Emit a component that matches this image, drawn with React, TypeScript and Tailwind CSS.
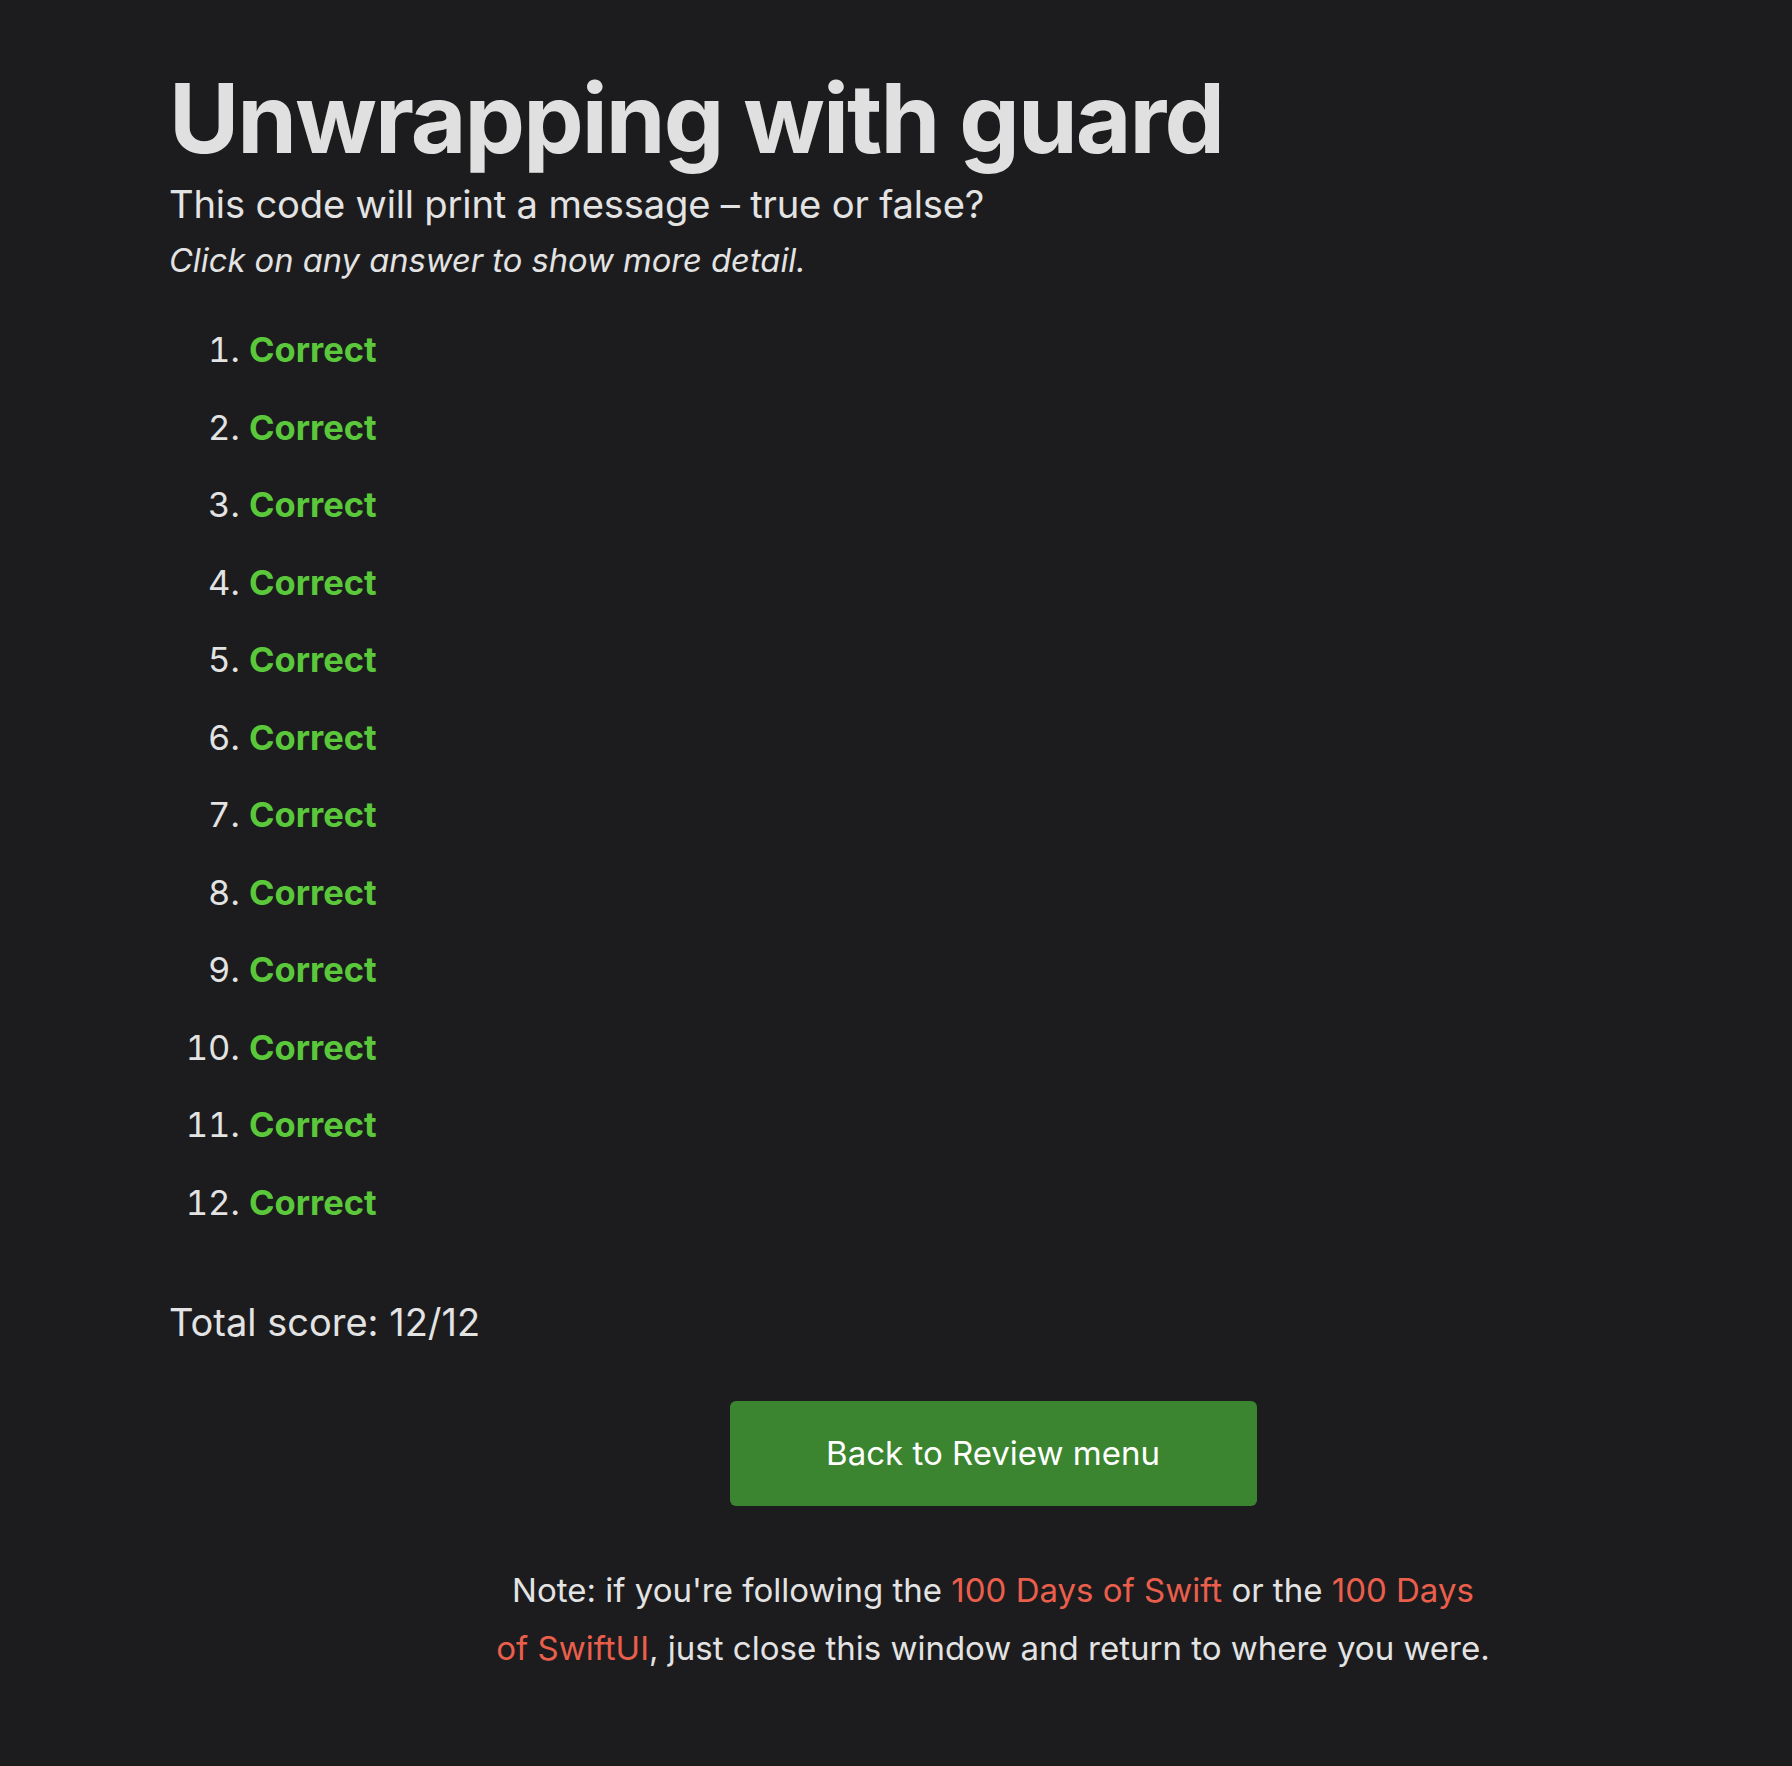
const answers = Array.from({ length: 12 }, (_, i) => i + 1);

export default function App() {
  return (
    <div className="min-h-screen bg-[#1c1c1e] text-[#e3e3e3] font-['Inter',sans-serif] pb-[80px]">
      <div className="pl-[169px] pt-[70px]">
        <h1 className="text-[96px] font-bold leading-none tracking-[-0.02em] text-[#e0e0e0]">
          Unwrapping with guard
        </h1>
        <p className="mt-[14px] text-[38.2px] leading-[48px] tracking-[-0.005em]">
          This code will print a message – true or false?
        </p>
        <p className="mt-[8px] text-[32.7px] leading-[48px] italic">
          Click on any answer to show more detail.
        </p>

        <ol className="mt-[27px] list-decimal pl-[80px] text-[34.5px]">
          {answers.map((n) => (
            <li key={n} className="leading-[77.5px]">
              <span className="font-bold text-[#5ac83a]">Correct</span>
            </li>
          ))}
        </ol>

        <p className="mt-[57px] text-[38px] leading-[48px]">Total score: 12/12</p>
      </div>

      <div className="pl-[194px] flex flex-col items-center">
        <button className="mt-[55px] w-[527px] h-[105px] rounded-[6px] bg-[#3b8530] text-white text-[33px]">
          Back to Review menu
        </button>
        <p className="mt-[55px] text-center text-[33px] leading-[58px]">
          Note: if you're following the{" "}
          <a className="text-[#ea5f4c]" href="#">100 Days of Swift</a> or the{" "}
          <a className="text-[#ea5f4c]" href="#">
            100 Days
            <br />
            of SwiftUI
          </a>
          , just close this window and return to where you were.
        </p>
      </div>
    </div>
  );
}
